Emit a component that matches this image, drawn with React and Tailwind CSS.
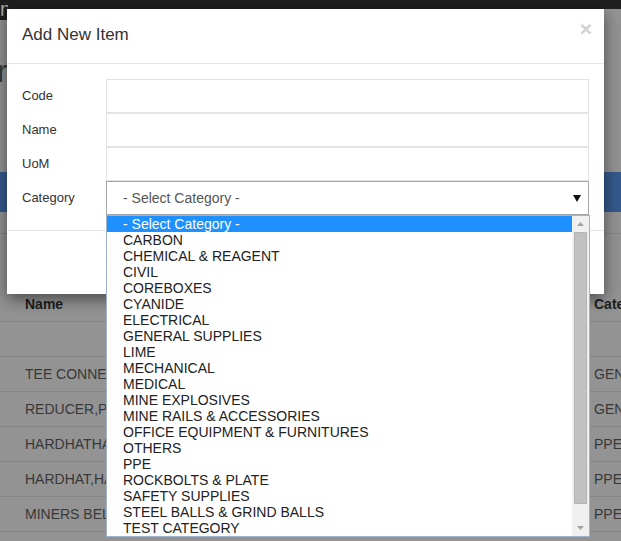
import React from 'react';

const categories = [
  '- Select Category -',
  'CARBON',
  'CHEMICAL & REAGENT',
  'CIVIL',
  'COREBOXES',
  'CYANIDE',
  'ELECTRICAL',
  'GENERAL SUPPLIES',
  'LIME',
  'MECHANICAL',
  'MEDICAL',
  'MINE EXPLOSIVES',
  'MINE RAILS & ACCESSORIES',
  'OFFICE EQUIPMENT & FURNITURES',
  'OTHERS',
  'PPE',
  'ROCKBOLTS & PLATE',
  'SAFETY SUPPLIES',
  'STEEL BALLS & GRIND BALLS',
  'TEST CATEGORY',
];

const rows = [
  { name: 'TEE CONNECTOR', cat: 'GENERAL SUPPLIES' },
  { name: 'REDUCER,PE', cat: 'GENERAL SUPPLIES' },
  { name: 'HARDHATHAT', cat: 'PPE' },
  { name: 'HARDHAT,HAT', cat: 'PPE' },
  { name: 'MINERS BELT', cat: 'PPE' },
];

const fields = ['Code', 'Name', 'UoM'];

const Background = () => (
  <div className="w-[621px] h-[541px] bg-[#939393] overflow-hidden text-[14px]">
    <div className="flex h-[20px]">
      <div className="w-[8px] h-[20px] bg-[#1f1f1f] text-[#a8a8a8] text-[20px] leading-[18px] overflow-hidden">n</div>
      <div className="flex-1 h-[9px] bg-[#1f1f1f]" />
    </div>
    <div className="h-[35px]" />
    <div className="h-[32px] text-[32px] leading-[32px] text-[#3c3c3c] -ml-[3px] overflow-hidden">r</div>
    <div className="h-[85px]" />
    <div className="h-[40px] bg-[#355a8c]" />
    <div className="h-[22px] border-b border-[#858585]" />
    <div className="h-[53px]" />
    <div className="flex items-center h-[35px] border-b border-[#858585] font-bold text-[#1e1e1e]">
      <div className="w-[594px] shrink-0 pl-[25px]">Name</div>
      <div className="whitespace-nowrap">Category</div>
    </div>
    <div className="h-[35px] border-b border-[#858585]" />
    {rows.map((r) => (
      <div key={r.name} className="flex items-center h-[35px] border-b border-[#858585] text-[#383838]">
        <div className="w-[594px] shrink-0 pl-[25px] whitespace-nowrap overflow-hidden">{r.name}</div>
        <div className="whitespace-nowrap">{r.cat}</div>
      </div>
    ))}
  </div>
);

const Dropdown = () => (
  <div className="absolute left-[106px] top-[215px] w-[484px] h-[322px] bg-white border border-[#9fb3cc] flex text-[14px]">
    <div className="flex-1 flex flex-col">
      {categories.map((c, i) => (
        <div
          key={c}
          className={`h-[16px] leading-[16px] pl-[16px] whitespace-nowrap ${i === 0 ? 'bg-[#1e90ff] text-white' : 'text-[#222]'}`}
        >
          {c}
        </div>
      ))}
    </div>
    <div className="w-[17px] bg-[#f0f0f0] flex flex-col items-center">
      <div className="h-[16px] flex items-center justify-center">
        <svg width="7" height="4" viewBox="0 0 7 4"><path d="M3.5 0L7 4H0z" fill="#a3a3a3" /></svg>
      </div>
      <div className="w-[13px] h-[272px] bg-[#c1c1c1] border border-[#b4b4b4]" />
      <div className="flex-1" />
      <div className="h-[16px] flex items-center justify-center">
        <svg width="7" height="4" viewBox="0 0 7 4"><path d="M0 0H7L3.5 4z" fill="#a3a3a3" /></svg>
      </div>
    </div>
  </div>
);

const Modal = () => (
  <div className="absolute left-[7px] top-[9px] w-[597px] h-[285px] bg-white shadow-[0_5px_15px_rgba(0,0,0,0.5)] flex flex-col">
    <div className="h-[55px] border-b border-[#e5e5e5] px-[15px] flex items-center justify-between">
      <div className="text-[17px] text-[#333] -mt-[3px]">Add New Item</div>
      <div className="text-[21px] font-bold text-[#d2d2d2] leading-none -mt-[16px] -mr-[3px]">×</div>
    </div>
    <div className="px-[15px] pt-[15px] pb-[15px] flex flex-col border-b border-[#e5e5e5]">
      {fields.map((f) => (
        <div key={f} className="flex items-center h-[34px]">
          <div className="w-[84px] text-[13px] text-[#333]">{f}</div>
          <div className="flex-1 h-[34px] border border-[#e3e3e3] bg-white" />
        </div>
      ))}
      <div className="flex items-center h-[34px]">
        <div className="w-[84px] text-[13px] text-[#333]">Category</div>
        <div className="flex-1 h-[34px] border border-[#a6a6a6] bg-white flex items-center justify-between pl-[16px] pr-[7px]">
          <span className="text-[14px] text-[#555]">- Select Category -</span>
          <svg width="8" height="7" viewBox="0 0 8 7"><path d="M0 0H8L4 7z" fill="#111" /></svg>
        </div>
      </div>
    </div>
    <div className="flex-1" />
  </div>
);

export default function App() {
  return (
    <div className="relative w-[621px] h-[541px] overflow-hidden font-['Liberation_Sans',Arial,sans-serif]">
      <Background />
      <Modal />
      <Dropdown />
    </div>
  );
}
